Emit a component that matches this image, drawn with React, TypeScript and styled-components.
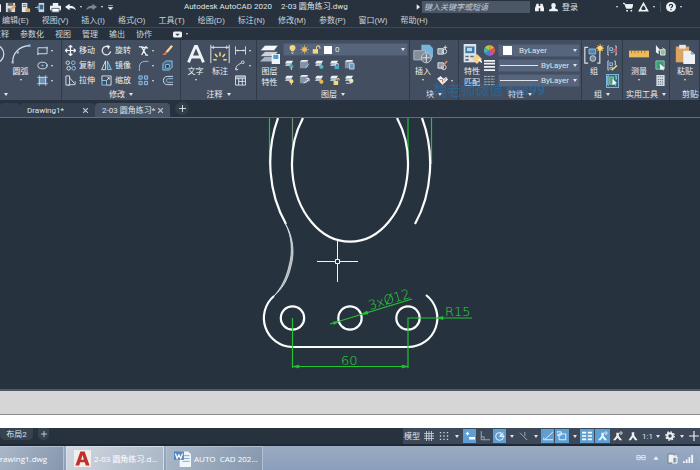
import React from 'react';
import styled, { createGlobalStyle } from 'styled-components';

const color = {
  chrome: '#27323e',
  panel: '#434f61',
  edge: '#303b49',
  field: '#56647c',
  canvas: '#26333f',
  text: '#dfe4ea',
  blue: '#8fc4ec',
  green: '#23c432',
};

const Global = createGlobalStyle`
  *, *::before, *::after { box-sizing: border-box; }
  html, body { margin: 0; background: ${color.chrome}; }
  body, button, input, select {
    font-family: Roboto, "Noto Sans CJK SC", sans-serif;
    font-size: 8px;
    line-height: 11px;
    color: ${color.text};
  }
  button { padding: 0; border: 0; background: none; }
`;

/* ---------- icons ---------- */

const Svg = styled.svg<{ $s: number }>`
  display: block;
  flex: none;
  width: ${(p) => p.$s}px;
  height: ${(p) => p.$s}px;
  fill: none;
  stroke: #dbe2ea;
  stroke-width: 1;
`;

const B = color.blue;
const Y = '#f5d77c';
const W = '#eef2f6';

const sheets = (
  <g stroke="none">
    <path d="M3 2h7L8 5H1z" fill={W} />
    <path d="M3 4.600h6L7 7.500H1z" fill="#b8c2cf" />
  </g>
);
const plates = (
  <g stroke="none">
    <path d="M3 1h7v7l-2 2H1V3z" fill="#8793a5" />
    <path d="M3 1h7L8 3H1z" fill="#e6ebf0" />
  </g>
);
const bulb = (x: number, y: number, fill: string) => <circle cx={x} cy={y} r="2.300" fill={fill} stroke="none" />;

const glyphs: Record<string, React.ReactNode> = {
  newDoc: <path d="M2 1h8l2 2v8H2z" fill={W} stroke="none" />,
  open: <g stroke="none"><path d="M1 1h10v10H1z" fill="#d9dee4" /><path d="M3 1h6v3H3zM3 7h4v4H3z" fill="#5d6876" /><path d="M5 8l5-5 2 2-5 5z" fill="#e3a95a" /></g>,
  save: <g stroke="none"><path d="M2 1h6v10H2z" fill="#e3e7eb" /><path d="M3 3h4M3 5h4" stroke="#55606f" /><path d="M6 7h5v4H6z" fill="#e2ab4f" /></g>,
  phone: <g><path d="M4 1h6v10H4z" fill="#c6d5e2" stroke="none" /><path d="M5 3h4v5H5z" fill="#39658b" stroke="none" /><path d="M0 6h4M2.500 4l2 2-2 2" stroke={B} /></g>,
  print: <g stroke="none"><path d="M3 1h6v3H3zM0 4h12v5H0z" fill={W} /><path d="M2 7h8v4H2z" fill="#fff" stroke="#5a6675" /></g>,
  undo: <path d="M0 5.500l5-3.500v2.200c4 0 6 1.500 7 4.800-2-2-4-2.300-7-2.300V9z" fill={W} stroke="none" />,
  redo: <path d="M12 5.500L7 2v2.200c-4 0-6 1.500-7 4.800 2-2 4-2.300 7-2.300V9z" fill="#7c8896" stroke="none" />,
  menuCaret: <path d="M2 2.500h8M2 6h8l-4 4z" fill={W} stroke={W} />,
  binoculars: <path d="M2 1h3v3h2V1h3l2 6v4H7V7H5v4H0V7z" fill={W} stroke="none" />,
  user: <path d="M6 0a3 3 0 013 3c0 2-1 3-1 4l4 2v2H0V9l4-2c0-1-1-2-1-4a3 3 0 013-3z" fill={W} stroke="none" />,
  cart: <g><path d="M0 1.500h2l2 6h6.500L12 3H3z" fill={W} stroke={W} /><path d="M4 10.500h2M9 10.500h2" stroke={W} strokeWidth="2" /></g>,
  a360: <path d="M6 1.500L1.500 9.500h9zM6 1v3M1 10l3-2M11 10L8 8" strokeWidth="1.600" stroke={W} />,
  help: <g><circle cx="6" cy="6" r="6" fill={W} stroke="none" /><path d="M4 5c0-3 4-2.500 4-.5C8 6 6 6 6 7.500M6 8.500v1.300" stroke="#27323e" strokeWidth="1.400" /></g>,
  play: <path d="M4 2l5 4-5 4z" fill={W} stroke="none" />,
  bubble: <g stroke="none"><rect x="0" y="2" width="12" height="8" rx="2" fill={W} /><path d="M3 5h6L6 8z" fill="#39434f" /></g>,
  circle: <circle cx="6" cy="6" r="5.300" strokeWidth=".7" />,
  arc: <g><path d="M1 11C1 5 5 1.500 11 1" strokeWidth=".7" /><path d="M.3 10.300h1.400v1.400H.3zM3.300 4.300h1.400v1.400H3.300zM10.300.3h1.400v1.400h-1.400z" fill={B} stroke="none" /></g>,
  rect: <g><path d="M1 3h10v6.500H1z" /><path d="M0 9h2v2H0zM10 2h2v2h-2z" fill={B} stroke="none" /></g>,
  ellipse: <g><ellipse cx="6" cy="6" rx="5" ry="3.600" /><path d="M5 5.300h2v1.400H5zM10 5h2v2h-2z" fill={B} stroke="none" /></g>,
  hatch: <g><path d="M2.500 2.500h7v7h-7z" fill="#6694b5" stroke={B} /><path d="M2.500 0v12M9.500 0v12M0 2.500h12M0 9.500h12" strokeWidth=".7" /></g>,
  move: <path d="M6 .5v11M.5 6h11M4 2.500l2-2 2 2M4 9.500l2 2 2-2M2.500 4l-2 2 2 2M9.500 4l2 2-2 2" stroke={W} strokeWidth="1.300" />,
  rotate: <g><path d="M8 2a4.600 4.600 0 102.500 5" strokeWidth="1.500" /><path d="M6 0l4 1-2 4z" fill={W} stroke="none" /></g>,
  trim: <path d="M1 2h3l5 9M9 1L4 11M4 2c3 0 4 2 7 1M8 11h3" stroke={W} strokeWidth="1.400" />,
  erase: <g stroke="none"><path d="M4 7l6-7 2 1.500-6 7z" fill="#f0d7a2" /><path d="M1 10l3-3 2 1.500L4 11H0z" fill="#d9743b" /></g>,
  copy: <g><circle cx="3" cy="3" r="1.900" /><circle cx="9" cy="3" r="2" stroke={B} /><circle cx="4" cy="9" r="2" /><circle cx="9.500" cy="9" r="2" stroke={B} /></g>,
  mirror: <g><path d="M5 1v9.500H.7z" /><path d="M7 1v9.500h4.300z" stroke={B} fill="#44769b" /></g>,
  fillet: <path d="M1.500 12V8c0-4 2-6.500 6-6.500h4" stroke={B} />,
  box: <g stroke={B}><path d="M1 4l3-3h7v7l-3 3H1z" fill="#466a87" /><path d="M4 5h4v4H4z" fill="#26333f" /></g>,
  stretch: <g><path d="M1 1h4v10H1z" /><path d="M5 3l5 6M6 10.500h5V7M3 11h3" /></g>,
  scale: <g><path d="M1 6h5v5H1z" stroke={B} /><path d="M1 6V1h10v10H6M6 6l3-3M7 3h2v2" /></g>,
  array: <g stroke={B} fill="#456b8b"><path d="M1 1h3.500v3.500H1zM7 1h3.500v3.500H7zM1 7h3.500v3.500H1zM7 7h3.500v3.500H7z" /></g>,
  offset: <g><path d="M12 1.500H6c-6 0-6 9 0 9h6" /><path d="M12 4H7C4 4 4 8 7 8h5" stroke={B} /></g>,
  letterA: <path d="M1.500 11L5.600 1.500h.8L10.500 11M3 7.800h6" stroke={W} strokeWidth="1.700" />,
  dim: <g><path d="M.5.500v11M11.500.5v11M.5 2h11M2 1v2M10 1v2" strokeWidth=".6" /><path d="M6 5v2.300M3 6l1.500 1.800M9 6L7.500 7.800M2 9.500h2M8 9.500h2" stroke={Y} strokeWidth=".9" /></g>,
  dimLinear: <path d="M.5 1.500v9M11.500 1.500v9M1 6h10M3 5v2M9 5v2" />,
  leader: <path d="M1 11c0-4 1-5 3-6l3-2M.5 9l1 2 2-1M7 2.500a1.500 1.500 0 103 0 1.500 1.500 0 10-3 0" />,
  table: <g><path d="M.5 1h11v10H.5zM.5 4h11M4 4v7M8 4v7M4 7h7" /><path d="M1 1h10v2H1z" fill="#aeb8c5" stroke="none" /></g>,
  layers: <g stroke="none"><path d="M3 7.500h8l-2.500 3H0z" fill="#aab5c3" /><path d="M3 4.500h8l-2.500 3H0z" fill="#cbd3dc" stroke="#434f61" strokeWidth=".4" /><path d="M3 .8h8L8.500 4H0z" fill="#f4f6f8" stroke="#434f61" strokeWidth=".4" /><path d="M7 6h5v6H7z" fill={W} /><path d="M8 6.500h3V9H8z" fill="#4d9bd2" /></g>,
  bulb: <g><path d="M6 0a4 4 0 014 4c0 2-2 2.500-2 4H4c0-1.500-2-2-2-4a4 4 0 014-4z" fill={Y} stroke="none" /><path d="M4.500 9.500h3M5 11.300h2" /></g>,
  sun: <g stroke="#eeb44b"><circle cx="6" cy="6" r="2.800" fill={Y} /><path d="M6 0v12M0 6h12M2 2l8 8M10 2l-8 8" strokeWidth=".9" /></g>,
  lock: <g><path d="M6 6V3a2.300 2.300 0 014.500 0v2" stroke={Y} strokeWidth="1.400" /><path d="M1 5.500h7v6H1z" fill={Y} stroke="none" /></g>,
  l1: <>{sheets}{bulb(8, 8, '#4aa6a0')}<path d="M8 9v3" /></>,
  l2: <>{plates}<path d="M7 10l4-5" stroke={B} /></>,
  l3: <>{sheets}{bulb(8, 8.500, '#45bfc0')}</>,
  l4: <>{sheets}<path d="M6 7h5v4H6z" fill="#4ba6cc" stroke="none" /><path d="M7 7V5h3v2" /></>,
  l5: <>{plates}<path d="M6 5h5v6H6z" fill="#659fbd" stroke="#b5d0df" /></>,
  l6: <>{sheets}{bulb(8, 8, Y)}<path d="M8 9v3" /></>,
  l7: <>{plates}<path d="M5 10l6-4M8 5h3v3" stroke={W} /></>,
  l8: <>{sheets}{bulb(8, 8.500, '#e7b750')}</>,
  l9: <>{sheets}<path d="M5 7.500h5V12H5z" fill={Y} stroke="none" /><path d="M9 7V5h2v2" stroke={Y} /></>,
  l10: <>{sheets}{bulb(8, 7.500, '#f1e6c4')}<path d="M2 10h6" /></>,
  insert: <g><path d="M5 .5h5l2 2V8H5z" fill="#75b4dc" stroke="none" /><path d="M.5 4h7v5.500h-7z" fill="#838e9b" stroke="#aeb6bf" strokeWidth=".6" /><circle cx="8" cy="8.300" r="3" fill="#6f7c8c" fillOpacity=".7" stroke="#c4ccd5" strokeWidth=".6" /><path d="M8 6v5M5.500 8.300h5" strokeWidth=".6" /></g>,
  block1: <g><path d="M1 4h6v6H1z" fill="#8b96a5" /><circle cx="8" cy="7" r="2.500" /><path d="M9 0l.7 2 2 .7-2 .7L9 6l-.7-2.600-2-.7 2-.7z" fill={Y} stroke="none" /></g>,
  block2: <g><path d="M1 3h6v6H1z" fill="#8b96a5" /><circle cx="7.500" cy="8" r="2.500" /><path d="M6 7l5-6" stroke="#e28b67" strokeWidth="1.800" /></g>,
  block3: <g><path d="M0 4l4-3 3 3 3-2 2 3-6 6z" fill={W} stroke="none" /><path d="M3 5h3v3M7 7l4-5" stroke="#bd7e63" /></g>,
  match: <g stroke="none"><path d="M1 0h7.500v11H1z" fill="#dce3e9" /><path d="M2 1.500h5.500v4H2z" fill="#3a7aab" /><path d="M3 2.300h3v2H3z" fill="#b9d7ea" /><path d="M2 7h2v1H2zM5 7h2v1H5zM2 9h2v1H2z" fill="#667" /><path d="M6 9l3-3 3 3-3 3z" fill="#f3d08b" /><path d="M10 9l2 2" stroke="#fff" /></g>,
  wheel: <g stroke="none"><path d="M6 6V0a6 6 0 015.200 3z" fill="#f0a13c" /><path d="M6 6l5.200-3a6 6 0 010 6z" fill="#e2574c" /><path d="M6 6l5.200 3A6 6 0 016 12z" fill="#b65bb5" /><path d="M6 6v6A6 6 0 01.8 9z" fill="#4c82d8" /><path d="M6 6L.8 9a6 6 0 010-6z" fill="#43b7b0" /><path d="M6 6L.8 3A6 6 0 016 0z" fill="#a9cf4e" /></g>,
  weights: <path d="M0 1h12M0 4h12M0 7.500h12M0 11h12" strokeWidth="1.800" stroke={W} />,
  types: <path d="M0 1.500h12M0 4.500h12M0 7.500h12M0 10.500h12" strokeDasharray="3 .8" stroke="#b3bdc9" />,
  group: <g><path d="M2.500 2H.5v9.500h2M8 2h1.500v9.500H8" strokeWidth=".7" /><path d="M3 3h4v3H3z" fill="#4d87b4" stroke={B} strokeWidth=".5" /><circle cx="5.300" cy="8.700" r="1.700" fill="#718398" strokeWidth=".5" /><path d="M9.700 0v5M7.200 2.500h5M8 .8l3.400 3.400M11.400.8L8 4.200" stroke="#eeb44b" strokeWidth=".6" /><circle cx="9.700" cy="2.500" r="1.500" fill={Y} stroke="none" /></g>,
  ungroup: <g><path d="M2 1H1v10h1M9 1h1v10H9" /><path d="M3 3h3v3H3zM4 8h3" stroke={B} /><path d="M7 4l4 4M11 4L7 8" stroke="#e0525b" strokeWidth="1.500" /></g>,
  groupEdit: <g><path d="M2 1H1v10h1M8 1h1v5" /><path d="M3 3h3v3H3zM3 8h3v2H3z" stroke={B} /><path d="M5 11l6-5" stroke={Y} strokeWidth="1.700" /></g>,
  groupPick: <g><path d="M2 1H1v10h1M9 1h1v4" /><path d="M3 2h4v8H3z" fill="#3d9f78" stroke="#8ad2ac" /><path d="M6 4l5 5H9l1 3-2-2-2 1z" fill="#fff" stroke="none" /></g>,
  ruler: <g><path d="M0 4h12v4H0z" fill="#efba5a" stroke="none" /><path d="M1.500 4v1.500M3.500 4v1.500M5.500 4v1.500M7.500 4v1.500M9.500 4v1.500" stroke="#8c6427" strokeWidth=".4" /></g>,
  quick: <g><path d="M1 0l5 6H4v4L1 8z" fill={W} stroke="none" /><path d="M6 5h5v6H6z" fill="#8ac29c" /><path d="M8 3l3 2" stroke={Y} /></g>,
  pickAll: <g><path d="M1 1h9v9H1z" fill="#3b9b77" stroke="#87cfab" /><path d="M5 4l6 5H9l1 3-2-2-2 1z" fill="#fff" stroke="none" /></g>,
  calc: <g><path d="M1.500 0h9v12h-9z" fill="#d9dfe5" stroke="none" /><path d="M3 2h6M3 5h6M3 7.500h6M3 10h6" stroke="#53606f" strokeDasharray="1.400 .8" /></g>,
  paste: <g stroke="none"><path d="M.5 1.500h8V11h-8z" fill="#dca362" /><path d="M2.500.5h4v2.300h-4z" fill="#e6e9ec" /><path d="M5 4h4.500L12 6.300V12H5z" fill="#edf1f5" /><path d="M9.500 4v2.300H12z" fill="#96a1ad" /></g>,
  grid: <path d="M0 3h12M0 6h12M0 9h12M3 0v12M6 0v12M9 0v12" stroke="#ccd4dd" />,
  dots: <path d="M1 2h11M1 6h11M1 10h11" stroke="#ccd4dd" strokeWidth="1.600" strokeDasharray="1.600 2.600" />,
  infer: <path d="M1 3h4M3 1v4M5 8h7M5 9.500h7" stroke="#fff" strokeWidth="1.500" />,
  ortho: <path d="M1.500 0v10.500H12M1.500 7H5v3" stroke="#aeb9c6" />,
  polar: <g stroke="#fff"><circle cx="5.500" cy="6.500" r="4.700" /><path d="M5.500 6.500h6M5.500 6.500L10 2M5.500 3.500a3 3 0 013 3" /></g>,
  iso: <path d="M1 2l9 9M7 1v5" stroke="#aeb9c6" />,
  track: <path d="M12 1L2 10.500h10M1 8v3" stroke="#fff" />,
  snap: <path d="M2.500 3.500h8v7h-8zM0 1h5v4H0z" stroke="#fff" />,
  lwt: <path d="M0 2h5M7 2h5M0 6h5M7 6h5M0 10h5M7 10h5" stroke="#fff" strokeWidth="2" />,
  person: <path d="M4.500 1.500h3v4l4 5.500H8.500L6 7.500 3.500 11H.5l4-5.500z" fill={W} stroke="none" />,
  personDot: <g><path d="M4 2h3v4l4 5H8L5.500 8 3 11H0l4-5z" fill={W} stroke="none" /><circle cx="9.500" cy="2.500" r="1.500" stroke={W} /></g>,
  gear: <g><circle cx="6" cy="6" r="3.300" stroke={W} strokeWidth="2.400" /><circle cx="6" cy="6" r="5.100" stroke={W} strokeWidth="1.500" strokeDasharray="2 2" /></g>,
  plus: <path d="M6 0v12M0 6h12" stroke={W} strokeWidth="1.400" />,
  close: <path d="M2 2l8 8M10 2l-8 8" stroke="#c5cdd6" strokeWidth="1.900" />,
  acad: <g stroke="none"><path d="M0 0h12v12H0z" fill="#f1eeee" /><path d="M1 11L4.500 1h3L11 11H8.300L7.600 8.700H4.400L3.700 11zM5 6.800h2L6 3.500z" fill="#c42f2c" fillRule="evenodd" /></g>,
  word: <g stroke="none"><path d="M4 1h6l2 2v9H4z" fill="#eef5fb" /><path d="M6 4h5M6 6h5M6 8h5" stroke="#8aa9c9" strokeWidth=".7" /><path d="M0 1h7v6H0z" fill="#5686c0" /><path d="M1 2.500L2.200 6l1.300-2.500L4.800 6 6 2.500" stroke="#fff" strokeWidth=".9" fill="none" /></g>,
  ime: <path d="M1 3h4v5H1zM7 3h4v5H7zM1 5.500h10" stroke="#e5edf5" />,
  up: <path d="M3 8l3-4 3 4z" fill={W} stroke="none" />,
  power: <g><path d="M2 2h6v9H2z" fill="#eef2f4" stroke="#6f7b89" /><path d="M7 5h4v6H6M8 3v3M10 3v3" stroke="#fff" /></g>,
  signal: <path d="M1 9v2M4 7v4M7 4.500V11M10 2v9" stroke="#f3f6f9" strokeWidth="2" />,
  sound: <path d="M1 4h3l4-4v12L4 8H1z" fill={W} stroke="none" />,
};

const Icon = ({ name, size = 11 }: { name: string; size?: number }) => (
  <Svg $s={size} viewBox="0 0 12 12" aria-hidden="true">{glyphs[name]}</Svg>
);

const Caret = styled.i<{ $small?: boolean }>`
  flex: none;
  width: 0;
  height: 0;
  border: ${(p) => (p.$small ? 1 : 2)}px solid transparent;
  border-top: ${(p) => (p.$small ? 2 : 3)}px solid #dfe5eb;
  border-bottom: 0;
`;

/* ---------- window header ---------- */

const Page = styled.div`
  display: flex;
  flex-direction: column;
  min-height: 100vh;
  overflow: hidden;
  background: ${color.chrome};
  white-space: nowrap;
`;

const TitleBar = styled.header`
  display: grid;
  grid-template-columns: 184px 1fr 285px;
  align-items: center;
  height: 14px;
`;

const QuickTools = styled.div`
  display: flex;
  align-items: center;
  gap: 4px;
  margin-left: -10px;
`;

const DocumentTitle = styled.h1`
  display: flex;
  gap: 9px;
  margin: 0;
  font-size: 8px;
  line-height: 12px;
  font-weight: 400;
`;

const TitleRight = styled.div`
  display: flex;
  align-items: center;
  gap: 5px;
`;

const SearchBox = styled.input`
  width: 108px;
  height: 12px;
  margin-left: -4px;
  padding: 0 2px;
  border: 0;
  background: #4b5767;
  font-style: italic;
  &::placeholder { color: #c3cad3; opacity: 1; }
`;

const IconButton = styled.button<{ $w?: number; $end?: boolean; $divided?: boolean }>`
  display: flex;
  align-items: center;
  justify-content: ${(p) => (p.$end ? 'flex-end' : 'center')};
  gap: 4px;
  flex: none;
  width: ${(p) => (p.$w ? `${p.$w}px` : 'auto')};
  border-left: ${(p) => (p.$divided ? '1px solid #46515e' : '0')};
`;

const MenuBar = styled.nav`
  display: flex;
  gap: 13px;
  height: 14px;
  padding-left: 2px;
  border-bottom: 1px solid #3e4957;
  button {
    line-height: 13px;
    color: #cbd2da;
    font-family: "Liberation Sans", "Noto Sans CJK SC", sans-serif;
  }
`;

const RibbonTabs = styled.nav`
  display: flex;
  align-items: center;
  gap: 11px;
  height: 12px;
  margin-left: -7px;
  button { color: #cfd6dd; }
`;

/* ---------- ribbon ---------- */

const Ribbon = styled.section`
  position: relative;
  display: grid;
  grid-template-columns: 62px 119px 76px minmax(153px, 1fr) 49px 123px 41px 47px 30px;
  background: ${color.panel};
`;

const Panel = styled.div`
  display: flex;
  flex-direction: column;
  min-width: 0;
  overflow: hidden;
  border-right: 1px solid ${color.edge};
`;

const PanelBody = styled.div<{ $gap?: number; $left?: number }>`
  display: flex;
  gap: ${(p) => p.$gap ?? 4}px;
  height: 48px;
  padding-top: 3px;
  padding-left: ${(p) => p.$left ?? 3}px;
`;

const PanelTitle = styled.button<{ $start?: number }>`
  display: flex;
  align-items: center;
  justify-content: ${(p) => (p.$start ? 'flex-start' : 'center')};
  padding-left: ${(p) => p.$start ?? 0}px;
  gap: 4px;
  height: 12px;
  color: #e9edf1;
`;

const Column = styled.div<{ $w?: number }>`
  display: grid;
  grid-template-columns: minmax(0, 1fr);
  grid-template-rows: repeat(3, 15px);
  flex: none;
  align-items: center;
  justify-items: start;
  width: ${(p) => (p.$w ? `${p.$w}px` : 'auto')};
`;

const Tool = styled.button<{ $on?: boolean }>`
  display: flex;
  align-items: center;
  gap: 3px;
  height: 14px;
  padding: 0 1px;
  color: #eef1f4;
  outline: ${(p) => (p.$on ? '1px solid #76b8dc' : 'none')};
  outline-offset: -1px;
  background: ${(p) => (p.$on ? '#35647d' : 'none')};
`;

const BigTool = styled.button<{ $w: number }>`
  display: flex;
  flex-direction: column;
  align-items: center;
  flex: none;
  width: ${(p) => p.$w}px;
  height: 45px;
  color: #eef1f4;
  svg { margin: 1px 0 2px; }
  i { margin-top: 2px; }
`;

const CutCircle = styled.div`
  width: 5px;
  display: flex;
  justify-content: flex-end;
  align-items: flex-start;
  padding-top: 1px;
  flex: none;
`;

const LayerColumn = styled.div`
  flex: 1;
  min-width: 0;
  padding-right: 1px;
`;

const Field = styled.label`
  display: flex;
  align-items: center;
  gap: 3px;
  width: 100%;
  height: 13px;
  padding: 0 2px 0 4px;
  background: ${color.field};
  border: 1px solid #4a576c;
`;

const Select = styled.select<{ $indent?: number }>`
  flex: 1;
  min-width: 0;
  height: 11px;
  padding: 0 0 0 ${(p) => p.$indent ?? 0}px;
  border: 0;
  appearance: none;
  background: transparent;
`;

const Swatch = styled.span<{ $s: number }>`
  flex: none;
  width: ${(p) => p.$s}px;
  height: ${(p) => p.$s}px;
  background: #fff;
`;

const LineSample = styled.span`
  flex: none;
  width: 38px;
  margin-left: -3px;
  border-top: 1px solid #dfe5eb;
`;

const LayerGrid = styled.div`
  display: grid;
  grid-template-columns: repeat(5, 11px);
  grid-auto-rows: 15px;
  column-gap: 4px;
  align-items: center;
  padding: 1px 0 0 1px;
`;

const PropertyList = styled(Column)`
  width: 82px;
`;

const Watermark = styled.span`
  position: absolute;
  right: 155px;
  bottom: 2px;
  font-size: 14px;
  line-height: 16px;
  color: #1c76bd;
  opacity: 0.5;
  pointer-events: none;
  b { font-weight: 700; }
`;

/* ---------- document area ---------- */

const FileTabs = styled.nav`
  display: flex;
  align-items: flex-end;
  height: 18px;
  border-bottom: 1px solid #626d7a;
`;

const FileTab = styled.div<{ $active?: boolean; $w: number }>`
  display: flex;
  align-items: center;
  justify-content: space-between;
  width: ${(p) => p.$w}px;
  height: 14px;
  padding: 0 6px 0 7px;
  border-radius: 4px 4px 0 0;
  background: ${(p) => (p.$active ? '#465264' : '#333f4e')};
`;

const NewTab = styled(IconButton)`
  align-self: center;
  margin-left: 5px;
  width: 14px;
  height: 13px;
  border-radius: 7px;
  background: #333e4b;
`;

const Canvas = styled.main`
  flex: 1;
  min-height: 0;
  display: flex;
  background: ${color.canvas};
`;

const Drawing = styled.svg`
  display: block;
  width: 100%;
  fill: none;
  text {
    font-family: "DejaVu Sans Light", "DejaVu Sans", sans-serif;
    font-weight: 200;
    font-size: 13px;
    fill: #2bd83a;
  }
`;

const History = styled.div`
  height: 26px;
  border-top: 2px solid #505a66;
  border-bottom: 1px solid #8c8c8c;
  background: #d6d6d6;
`;

const CommandLine = styled.input`
  height: 13px;
  padding: 0 4px;
  border: 0;
  background: #fff;
  color: #222;
`;

const StatusRow = styled.footer`
  display: flex;
  justify-content: space-between;
  height: 18px;
  border-bottom: 2px solid #1f2934;
`;

const LayoutTabs = styled.div`
  display: flex;
  gap: 5px;
  height: 12px;
`;

const LayoutTab = styled.button<{ $w: number }>`
  display: flex;
  align-items: center;
  justify-content: center;
  width: ${(p) => p.$w}px;
  background: #36424f;
  border-radius: 0 0 5px 5px;
`;

const StatusTools = styled.div`
  display: flex;
  align-items: center;
  overflow: hidden;
  background: #3d4959;
`;

const StatusCell = styled.button<{ $w: number; $on?: boolean }>`
  display: flex;
  align-items: center;
  justify-content: center;
  flex: none;
  gap: 3px;
  width: ${(p) => p.$w}px;
  height: 14px;
  background: ${(p) => (p.$on ? '#5d9fd3' : 'none')};
  border: solid #3d4959;
  border-width: 0 1px 0 0;
`;

const TaskBar = styled.footer`
  display: flex;
  justify-content: space-between;
  height: 24px;
  background: linear-gradient(#9aabc2, #8b9fbc);
`;

const Tasks = styled.div`
  display: flex;
  gap: 2px;
`;

const Task = styled.button<{ $w: number; $active?: boolean }>`
  display: flex;
  align-items: center;
  gap: 3px;
  width: ${(p) => p.$w}px;
  padding-left: 7px;
  overflow: hidden;
  color: #fff;
  font-family: "Open Sans", "Noto Sans CJK SC", sans-serif;
  border: 1px solid ${(p) => (p.$active ? '#d5dde6' : '#b2c0d0')};
  border-bottom: 0;
  background: ${(p) => (p.$active ? 'linear-gradient(120deg, #d1d8e1, #a9b6c5)' : 'linear-gradient(120deg, #a9b7c8, #8697ad)')};
`;

const FirstTask = styled(Task)`
  padding-left: 0;
  border-left: 0;
  span { margin-left: -6px; }
`;

const Tray = styled.div`
  display: flex;
  align-items: center;
  gap: 5px;
  margin-right: -10px;
`;

/* ---------- data ---------- */

const menus = ['编辑(E)', '视图(V)', '插入(I)', '格式(O)', '工具(T)', '绘图(D)', '标注(N)', '修改(M)', '参数(P)', '窗口(W)', '帮助(H)'];
const tabs = ['注释', '参数化', '视图', '管理', '输出', '协作'];

type Item = { icon: string; label: string; text?: boolean; drop?: boolean; on?: boolean };

const Tools = ({ items, width }: { items: Item[]; width?: number }) => (
  <Column $w={width}>
    {items.map((t) => (
      <Tool key={t.label} aria-label={t.label} $on={t.on}>
        <Icon name={t.icon} />
        {t.text && <span>{t.label}</span>}
        {t.drop && <Caret $small />}
      </Tool>
    ))}
  </Column>
);

const status: { w: number; icon?: string; text?: string; on?: boolean; label: string }[] = [
  { w: 19, text: '模型', label: '模型' },
  { w: 15, icon: 'grid', label: '栅格' },
  { w: 15, icon: 'dots', label: '捕捉模式' },
  { w: 11, label: '捕捉选项' },
  { w: 14, icon: 'infer', on: true, label: '动态输入' },
  { w: 16, icon: 'ortho', label: '正交' },
  { w: 14, icon: 'polar', on: true, label: '极轴追踪' },
  { w: 10, label: '极轴选项' },
  { w: 15, icon: 'iso', label: '等轴测' },
  { w: 9, label: '等轴测选项' },
  { w: 14, icon: 'track', on: true, label: '对象捕捉追踪' },
  { w: 15, icon: 'snap', on: true, label: '对象捕捉' },
  { w: 10, label: '捕捉对象选项' },
  { w: 15, icon: 'lwt', on: true, label: '线宽' },
  { w: 16, icon: 'personDot', on: true, label: '注释可见性' },
  { w: 15, icon: 'personDot', label: '自动缩放' },
  { w: 14, icon: 'person', label: '注释比例' },
  { w: 23, text: '1:1', label: '比例' },
  { w: 14, icon: 'gear', label: '工作空间' },
  { w: 11, label: '工作空间选项' },
  { w: 12, icon: 'plus', label: '注释监视器' },
];

export default function App() {
  return (
    <Page>
      <Global />
      <TitleBar>
        <QuickTools>
          <IconButton aria-label="新建"><Icon name="newDoc" /></IconButton>
          <IconButton aria-label="打开"><Icon name="open" /></IconButton>
          <IconButton aria-label="保存"><Icon name="save" /></IconButton>
          <IconButton aria-label="移动设备"><Icon name="phone" /></IconButton>
          <IconButton aria-label="打印"><Icon name="print" /></IconButton>
          <IconButton aria-label="放弃"><Icon name="undo" /><Caret $small /></IconButton>
          <IconButton aria-label="重做"><Icon name="redo" /><Caret $small /></IconButton>
          <IconButton aria-label="自定义"><Icon name="menuCaret" size={7} /></IconButton>
        </QuickTools>
        <DocumentTitle><span>Autodesk AutoCAD 2020</span><span>2-03 圆角练习.dwg</span></DocumentTitle>
        <TitleRight>
          <IconButton aria-label="展开搜索" $w={6}><Icon name="play" size={8} /></IconButton>
          <SearchBox aria-label="搜索" placeholder="键入关键字或短语" />
          <IconButton aria-label="查找"><Icon name="binoculars" size={9} /></IconButton>
          <IconButton><Icon name="user" size={9} />登录</IconButton>
          <IconButton aria-label="账户选项" $w={35} $end><Caret $small /></IconButton>
          <IconButton aria-label="应用商店"><Icon name="cart" size={10} /></IconButton>
          <IconButton aria-label="保持连接"><Icon name="a360" size={11} /><Caret $small /></IconButton>
          <IconButton aria-label="帮助" $w={26} $divided><Icon name="help" size={10} /><Caret $small /></IconButton>
        </TitleRight>
      </TitleBar>
      <MenuBar>{menus.map((m) => <button key={m}>{m}</button>)}</MenuBar>
      <RibbonTabs>
        {tabs.map((t) => <button key={t}>{t}</button>)}
        <IconButton aria-label="功能区选项" $w={34}><Icon name="bubble" size={9} /><Caret $small /></IconButton>
      </RibbonTabs>

      <Ribbon>
        <Panel>
          <PanelBody $left={0} $gap={4}>
            <CutCircle><Icon name="circle" size={20} /></CutCircle>
            <BigTool $w={23}><Icon name="arc" size={20} />圆弧<Caret $small /></BigTool>
            <Tools items={[
              { icon: 'rect', label: '矩形', drop: true },
              { icon: 'ellipse', label: '椭圆', drop: true },
              { icon: 'hatch', label: '图案填充', drop: true },
            ]} />
          </PanelBody>
          <PanelTitle aria-label="绘图" $start={4}><Caret /></PanelTitle>
        </Panel>
        <Panel>
          <PanelBody $left={2} $gap={0}>
            <Tools width={36} items={[
              { icon: 'move', label: '移动', text: true },
              { icon: 'copy', label: '复制', text: true },
              { icon: 'stretch', label: '拉伸', text: true },
            ]} />
            <Tools width={37} items={[
              { icon: 'rotate', label: '旋转', text: true },
              { icon: 'mirror', label: '镜像', text: true },
              { icon: 'scale', label: '缩放', text: true },
            ]} />
            <Tools width={24} items={[
              { icon: 'trim', label: '修剪', drop: true },
              { icon: 'fillet', label: '圆角', drop: true },
              { icon: 'array', label: '阵列', drop: true },
            ]} />
            <Tools items={[
              { icon: 'erase', label: '删除' },
              { icon: 'box', label: '分解' },
              { icon: 'offset', label: '偏移' },
            ]} />
          </PanelBody>
          <PanelTitle>修改<Caret /></PanelTitle>
        </Panel>
        <Panel>
          <PanelBody $left={4} $gap={3}>
            <BigTool $w={21}><Icon name="letterA" size={20} />文字<Caret $small /></BigTool>
            <BigTool $w={22}><Icon name="dim" size={20} />标注</BigTool>
            <Tools items={[
              { icon: 'dimLinear', label: '线性', drop: true },
              { icon: 'leader', label: '引线', drop: true },
              { icon: 'table', label: '表格' },
            ]} />
          </PanelBody>
          <PanelTitle>注释<Caret /></PanelTitle>
        </Panel>
        <Panel>
          <PanelBody $left={2} $gap={3}>
            <BigTool $w={21}><Icon name="layers" size={20} /><span>图层<br />特性</span></BigTool>
            <LayerColumn>
              <Field>
                <Icon name="bulb" size={9} /><Icon name="sun" size={9} /><Icon name="lock" size={9} /><Swatch $s={8} />
                <Select aria-label="图层"><option>0</option></Select>
                <Caret />
              </Field>
              <LayerGrid>
                {[1, 2, 3, 4, 5, 6, 7, 8, 9, 10].map((n) => (
                  <IconButton key={n} aria-label={`图层工具 ${n}`}><Icon name={`l${n}`} /></IconButton>
                ))}
              </LayerGrid>
            </LayerColumn>
          </PanelBody>
          <PanelTitle>图层<Caret /></PanelTitle>
        </Panel>
        <Panel>
          <PanelBody $left={2} $gap={2}>
            <BigTool $w={22}><Icon name="insert" size={20} />插入<Caret $small /></BigTool>
            <Tools items={[
              { icon: 'block1', label: '创建块' },
              { icon: 'block2', label: '编辑块' },
              { icon: 'block3', label: '编辑属性', drop: true },
            ]} />
          </PanelBody>
          <PanelTitle>块<Caret /></PanelTitle>
        </Panel>
        <Panel>
          <PanelBody $left={3} $gap={2}>
            <BigTool $w={20}><Icon name="match" size={20} /><span>特性<br />匹配</span></BigTool>
            <Column $w={12}><Icon name="wheel" /><Icon name="weights" /><Icon name="types" /></Column>
            <PropertyList>
              <Field><Swatch $s={9} /><Select aria-label="颜色" $indent={4}><option>ByLayer</option></Select><Caret /></Field>
              <Field><LineSample /><Select aria-label="线宽"><option>ByLayer</option></Select><Caret /></Field>
              <Field><LineSample /><Select aria-label="线型"><option>ByLayer</option></Select><Caret /></Field>
            </PropertyList>
          </PanelBody>
          <PanelTitle>特性<Caret /></PanelTitle>
        </Panel>
        <Panel>
          <PanelBody $left={1} $gap={1}>
            <BigTool $w={22}><Icon name="group" size={20} />组</BigTool>
            <Tools items={[
              { icon: 'ungroup', label: '解除编组' },
              { icon: 'groupEdit', label: '组编辑' },
              { icon: 'groupPick', label: '组选择', on: true },
            ]} />
          </PanelBody>
          <PanelTitle>组<Caret /></PanelTitle>
        </Panel>
        <Panel>
          <PanelBody $left={5} $gap={4}>
            <BigTool $w={22}><Icon name="ruler" size={20} />测量<Caret $small /></BigTool>
            <Tools items={[
              { icon: 'quick', label: '快速选择' },
              { icon: 'pickAll', label: '全部选择' },
              { icon: 'calc', label: '计算器' },
            ]} />
          </PanelBody>
          <PanelTitle>实用工具<Caret /></PanelTitle>
        </Panel>
        <Panel>
          <PanelBody $left={4}>
            <BigTool $w={22}><Icon name="paste" size={20} />粘贴<Caret $small /></BigTool>
          </PanelBody>
          <PanelTitle $start={12}>剪贴板</PanelTitle>
        </Panel>
        <Watermark>魏老师微信 <b>nxs99</b></Watermark>
      </Ribbon>

      <FileTabs>
        <FileTab $w={20} />
        <FileTab $w={75}>Drawing1*<IconButton aria-label="关闭 Drawing1"><Icon name="close" size={7} /></IconButton></FileTab>
        <FileTab $w={75} $active>2-03 圆角练习*<IconButton aria-label="关闭 2-03"><Icon name="close" size={7} /></IconButton></FileTab>
        <NewTab aria-label="新建图形"><Icon name="plus" size={7} /></NewTab>
      </FileTabs>

      <Canvas>
        <Drawing viewBox="0 118 700 271" preserveAspectRatio="xMidYMin meet" role="img" aria-label="圆角练习图形">
          <g stroke={color.green} strokeWidth="1.200">
            <path d="M269.500 118v46M408 118v46M431.500 118v46" />
            <path d="M292.500 118v46" stroke="#71907a" />
          </g>
          <g stroke="#fbfcfc" strokeWidth="2.200">
            <path d="M303 118A58 78 0 10397 118" />
            <path d="M278 118A81 104 0 00286 224" />
            <path d="M422 118A81 104 0 01415 224" />
            <path d="M274 296A29 29 0 00292 347H408A29 29 0 00426 295" />
            <circle cx="292.500" cy="318" r="11.700" />
            <circle cx="350" cy="318" r="11.700" />
            <circle cx="408" cy="318" r="11.700" />
          </g>
          <path d="M285 223C293 236 295 252 291 266C288 280 282 289 274 296C281 288 286 279 289 266C293 252 292 236 285 223z" fill="#a9b2ba" stroke="#e5e9ec" strokeWidth=".8" />
          <path d="M337.500 240v19M337.500 264v18M317 261.500h18M340 261.500h18M335.500 259.500h4v4h-4z" stroke="#f2f4f5" />
          <g stroke={color.green} strokeWidth="1.200">
            <path d="M292.500 318v50M408 368V318H472M293 366.500H408M330 324L412 299" />
            <path d="M293 366.500l6-1.500v3zM408 366.500l-6-1.500v3zM437 318l6-1.500v3zM339 321.500l-6 .5 1 2.500zM361 314.500l6-3.500 1 3z" fill={color.green} strokeWidth=".6" />
          </g>
          <text x="341" y="365">60</text>
          <text x="445" y="316">R15</text>
          <text x="370" y="310" transform="rotate(-17 370 310)">3xØ12</text>
        </Drawing>
      </Canvas>

      <History />
      <CommandLine aria-label="命令行" />
      <StatusRow>
        <LayoutTabs>
          <LayoutTab $w={33}>布局2</LayoutTab>
          <LayoutTab $w={11} aria-label="新建布局"><Icon name="plus" size={6} /></LayoutTab>
        </LayoutTabs>
        <StatusTools>
          {status.map((s) => (
            <StatusCell key={s.label} $w={s.w} $on={s.on} aria-label={s.label}>
              {s.icon && <Icon name={s.icon} size={10} />}
              {s.text}
              {!s.icon && s.text !== '模型' && <Caret />}
            </StatusCell>
          ))}
        </StatusTools>
      </StatusRow>
      <TaskBar>
        <Tasks>
          <FirstTask $w={64}><span>Drawing1.dwg</span></FirstTask>
          <Task $w={98} $active><Icon name="acad" size={17} />2-03 圆角练习.d...</Task>
          <Task $w={97}><Icon name="word" size={17} />AUTO&nbsp; CAD 202...</Task>
        </Tasks>
        <Tray>
          <Icon name="ime" size={10} /><Icon name="up" size={10} /><Icon name="power" size={12} /><Icon name="signal" size={11} /><Icon name="sound" size={11} />
        </Tray>
      </TaskBar>
    </Page>
  );
}
